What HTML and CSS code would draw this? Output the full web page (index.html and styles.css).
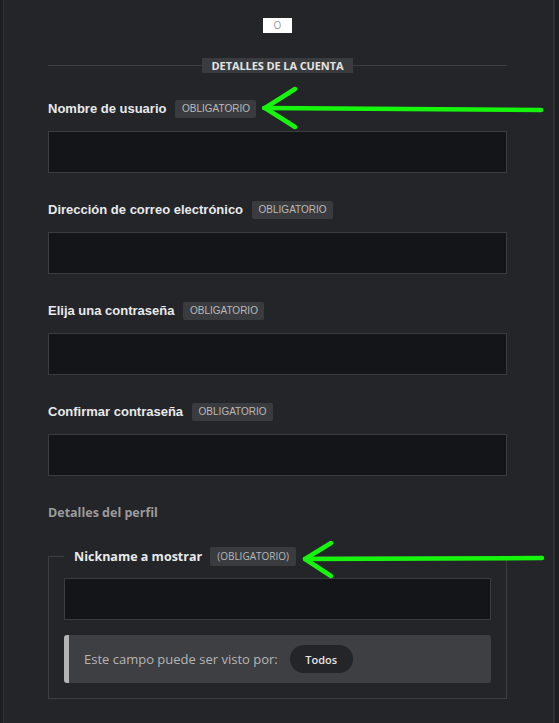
FILE: index.html
```html
<!DOCTYPE html>
<html lang="es">
<head>
<meta charset="utf-8">
<title>Registro</title>
<link rel="stylesheet" href="styles.css">
</head>
<body>
<div class="panel">
  <div class="captcha-row"><span class="captcha">O</span></div>

  <div class="section-head">
    <span class="rule"></span>
    <span class="section-title">DETALLES DE LA CUENTA</span>
    <span class="rule"></span>
  </div>

  <div class="field">
    <div class="label-row"><span class="label">Nombre de usuario</span><span class="req">OBLIGATORIO</span></div>
    <div class="input"></div>
  </div>
  <div class="field">
    <div class="label-row"><span class="label">Dirección de correo electrónico</span><span class="req">OBLIGATORIO</span></div>
    <div class="input"></div>
  </div>
  <div class="field">
    <div class="label-row"><span class="label">Elija una contraseña</span><span class="req">OBLIGATORIO</span></div>
    <div class="input"></div>
  </div>
  <div class="field">
    <div class="label-row"><span class="label">Confirmar contraseña</span><span class="req">OBLIGATORIO</span></div>
    <div class="input"></div>
  </div>

  <div class="profile-title">Detalles del perfil</div>

  <fieldset class="profile-box">
    <legend class="legend"><span class="legend-text">Nickname a mostrar</span><span class="legend-req">(OBLIGATORIO)</span></legend>
    <div class="input"></div>
    <div class="visibility">
      <span class="vis-text">Este campo puede ser visto por:</span>
      <span class="pill">Todos</span>
    </div>
  </fieldset>

  <svg class="arrows" width="559" height="723" viewBox="0 0 559 723">
    <g fill="none" stroke="#16f50c" stroke-width="4.5" stroke-linecap="round" stroke-linejoin="round">
      <path d="M541 110 L264 108"/>
      <path d="M295 89 L265 108 L295 127"/>
      <path d="M542 558 L305 559"/>
      <path d="M331 543 L305 559 L331 576"/>
    </g>
  </svg>
</div>
</body>
</html>
```

FILE: styles.css
```css
html, body {
  margin: 0;
  padding: 0;
}
body {
  background: #1d1e21;
  width: 559px;
  height: 723px;
  overflow: hidden;
}
.panel {
  margin-left: 3px;
  width: 459px;
  height: 705px;
  background: #242528;
  border-left: 1px solid #2f3033;
  border-right: 2px solid #2f3033;
  padding: 18px 46px 0 44px;
  font-family: "Liberation Sans", Arial, sans-serif;
}
.captcha-row {
  display: flex;
  justify-content: center;
}
.captcha {
  display: block;
  width: 29px;
  height: 15px;
  background: #ffffff;
  color: #9a9a9a;
  font-family: "Open Sans", sans-serif;
  font-size: 10px;
  line-height: 15px;
  text-align: center;
}
.section-head {
  display: flex;
  align-items: center;
  margin-top: 25px;
  height: 15px;
}
.rule {
  flex: 1;
  height: 1px;
  background: #3c3d40;
}
.section-title {
  background: #3a3b3e;
  color: #e4e4e4;
  font-family: "Open Sans", sans-serif;
  font-weight: 700;
  font-size: 11px;
  line-height: 15px;
  padding: 0 10px;
  letter-spacing: -0.1px;
}
.field {
  margin-top: 27px;
}
.field + .field {
  margin-top: 28px;
}
.label-row {
  display: flex;
  align-items: center;
  height: 18px;
}
.label {
  color: #e8eaec;
  font-weight: 700;
  font-size: 13px;
  line-height: 15px;
  margin-right: 9px;
  padding-bottom: 2px;
}
.req {
  background: #3a3b3e;
  color: #b9b9b9;
  font-size: 10px;
  line-height: 18px;
  height: 18px;
  padding: 0 6.5px;
  border-radius: 2px;
}
.input {
  margin-top: 13px;
  height: 40px;
  background: #141519;
  border: 1px solid #3b3c3f;
}
.profile-title {
  margin-top: 29px;
  color: #9b9b9b;
  font-family: "Open Sans", sans-serif;
  font-weight: 700;
  font-size: 12.5px;
  line-height: 16px;
}
.profile-box {
  margin: 26px 0 0 0;
  border: 1px solid #3d3e41;
  padding: 12px 15px 15px 15px;
  min-width: 0;
}
.legend {
  padding: 0 10px;
  display: flex;
  align-items: center;
  height: 19px;
}
.legend-text {
  color: #e8eaec;
  font-family: "Open Sans", sans-serif;
  font-weight: 700;
  font-size: 12.5px;
  margin-right: 8px;
}
.legend-req {
  background: #3a3b3e;
  color: #b9b9b9;
  font-family: "Open Sans", sans-serif;
  font-size: 10px;
  line-height: 19px;
  padding: 0 7px;
  border-radius: 2px;
}
.profile-box .input {
  margin-top: 0;
}
.visibility {
  margin-top: 15px;
  display: flex;
  align-items: center;
  height: 48px;
  background: #3e3f42;
  border-left: 5px solid #b4b4b4;
  border-radius: 3px;
  padding-left: 15px;
}
.vis-text {
  color: #b5b5b5;
  font-family: "Open Sans", sans-serif;
  font-size: 13px;
  margin-right: 12px;
}
.pill {
  display: flex;
  align-items: center;
  justify-content: center;
  width: 63px;
  height: 28px;
  border-radius: 14px;
  background: #242528;
  color: #e6e6e6;
  font-family: "Open Sans", sans-serif;
  font-weight: 600;
  font-size: 11px;
}
.arrows {
  position: absolute;
  left: 0;
  top: 0;
  pointer-events: none;
}
```
